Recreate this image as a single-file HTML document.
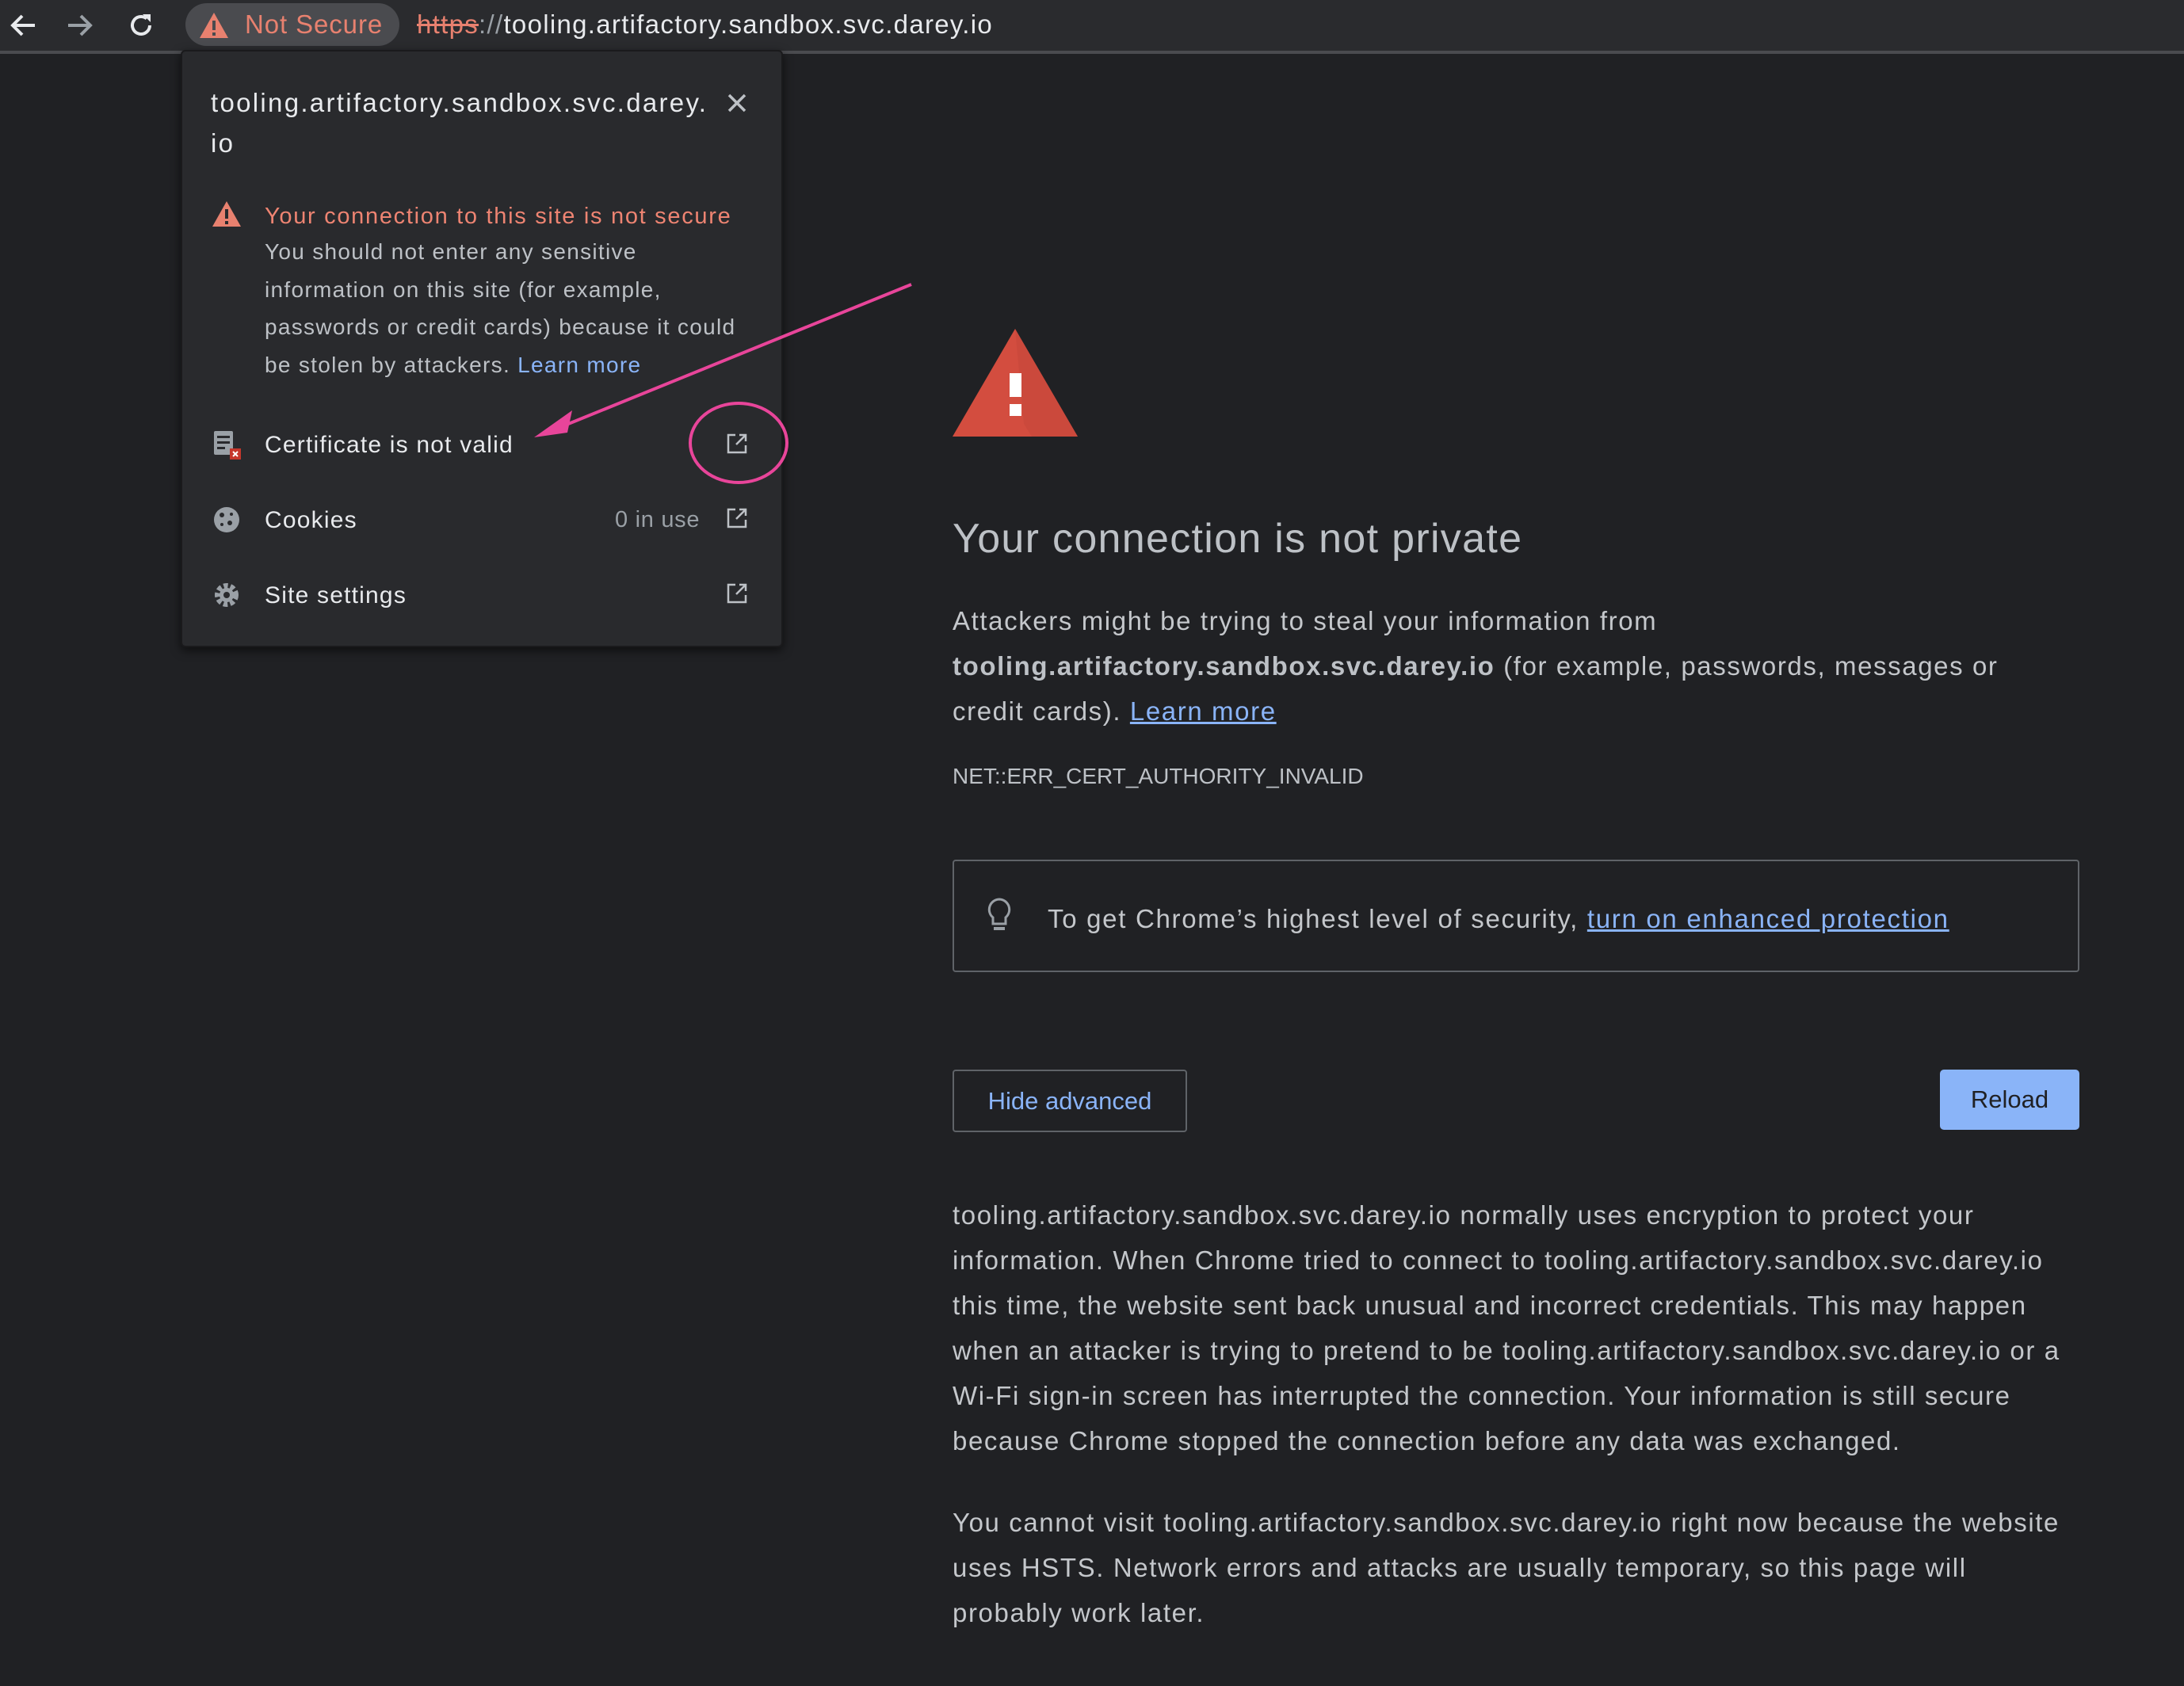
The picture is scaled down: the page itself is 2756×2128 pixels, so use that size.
<!DOCTYPE html>
<html><head><meta charset="utf-8"><style>
*{margin:0;padding:0;box-sizing:border-box}
body{width:2756px;height:2128px;background:#202124;font-family:"Liberation Sans",sans-serif;position:relative;overflow:hidden;color:#bdc1c6}
.a{position:absolute;white-space:nowrap}
.toolbar{position:absolute;left:0;top:0;width:2756px;height:68px;background:#2a2b2e;border-bottom:4px solid #4a4b4f}
.p{font-size:33px;line-height:57px;letter-spacing:1.6px;color:#c4c7cb}
.lnk{color:#8ab4f8;text-decoration:underline}
.pop{position:absolute;left:228px;top:63px;width:760px;height:754px;background:#292a2d;border:2px solid #1a1a1c;border-radius:6px;box-shadow:0 4px 12px rgba(0,0,0,.6)}
.pt{font-size:28px;color:#bdc1c6;line-height:47.5px;letter-spacing:1.3px}
.row{font-size:30px;color:#e8eaed;letter-spacing:1.2px}
</style></head><body>
<div class="toolbar"></div>
<svg class="a" style="left:8px;top:12px" width="44" height="40" viewBox="0 0 44 40"><path d="M36 20H8M20 8L8 20l12 12" stroke="#e8eaed" stroke-width="4" fill="none"/></svg>
<svg class="a" style="left:80px;top:12px" width="44" height="40" viewBox="0 0 44 40"><path d="M6 20h28M22 8l12 12-12 12" stroke="#9aa0a6" stroke-width="4" fill="none"/></svg>
<svg class="a" style="left:156px;top:10px" width="44" height="44" viewBox="0 0 44 44"><path d="M33 22a11 11 0 1 1-4-8.5" stroke="#e8eaed" stroke-width="4" fill="none"/><path d="M24 8h10v10z" fill="#e8eaed"/></svg>
<div class="a" style="left:234px;top:4px;width:270px;height:54px;border-radius:27px;background:#4a4b4f"></div>
<svg class="a" style="left:250px;top:14px" width="40" height="36" viewBox="0 0 40 36"><path d="M20 2L38 34H2z" fill="#e8816f"/><rect x="18" y="12" width="4" height="12" fill="#4a4b4f"/><rect x="18" y="27" width="4" height="4" fill="#4a4b4f"/></svg>
<div class="a" style="left:309px;top:12px;font-size:33px;color:#e8816f;letter-spacing:0.9px">Not Secure</div>
<div class="a" style="left:526px;top:12px;font-size:33px;color:#e8eaed;letter-spacing:1.3px"><span style="color:#e8816f;text-decoration:line-through">https</span><span style="color:#9aa0a6">://</span>tooling.artifactory.sandbox.svc.darey.io</div>

<div class="pop"></div>
<div class="a" style="left:266px;top:104px;font-size:33px;color:#e8eaed;line-height:51px;letter-spacing:2.3px">tooling.artifactory.sandbox.svc.darey.<br>io</div>
<svg class="a" style="left:916px;top:116px" width="28" height="28" viewBox="0 0 28 28"><path d="M4 4l20 20M24 4L4 24" stroke="#bdc1c6" stroke-width="3.5"/></svg>
<svg class="a" style="left:266px;top:252px" width="40" height="36" viewBox="0 0 40 36"><path d="M20 2L38 34H2z" fill="#e8816f"/><rect x="18" y="12" width="4" height="12" fill="#292a2d"/><rect x="18" y="27" width="4" height="4" fill="#292a2d"/></svg>
<div class="a pt" style="left:334px;top:250px;color:#ee8472;font-size:29px;letter-spacing:1.7px">Your connection to this site is not secure</div>
<div class="a pt" style="left:334px;top:294px">You should not enter any sensitive<br>information on this site (for example,<br>passwords or credit cards) because it could<br>be stolen by attackers. <span style="color:#8ab4f8">Learn more</span></div>
<svg class="a" style="left:268px;top:542px" width="40" height="40" viewBox="0 0 40 40"><rect x="2" y="2" width="24" height="30" rx="2" fill="#9aa0a6"/><rect x="6" y="8" width="16" height="3" fill="#292a2d"/><rect x="6" y="15" width="16" height="3" fill="#292a2d"/><rect x="6" y="22" width="10" height="3" fill="#292a2d"/><rect x="22" y="24" width="14" height="14" fill="#c5372c"/><path d="M26 28l6 6M32 28l-6 6" stroke="#fff" stroke-width="2"/></svg>
<div class="a row" style="left:334px;top:545px">Certificate is not valid</div>
<svg class="a" style="left:268px;top:638px" width="36" height="36" viewBox="0 0 36 36"><circle cx="18" cy="18" r="16" fill="#9aa0a6"/><circle cx="12" cy="12" r="3" fill="#292a2d"/><circle cx="22" cy="22" r="3" fill="#292a2d"/><circle cx="12" cy="24" r="2" fill="#292a2d"/><circle cx="24" cy="11" r="2" fill="#292a2d"/></svg>
<div class="a row" style="left:334px;top:640px">Cookies</div>
<div class="a" style="left:776px;top:640px;font-size:29px;color:#9aa0a6;letter-spacing:0.7px">0 in use</div>
<svg class="a" style="left:268px;top:733px" width="36" height="36" viewBox="0 0 36 36"><circle cx="18" cy="18" r="11" fill="none" stroke="#9aa0a6" stroke-width="8" stroke-dasharray="5 3"/><circle cx="18" cy="18" r="9" fill="#9aa0a6"/><circle cx="18" cy="18" r="4" fill="#292a2d"/></svg>
<div class="a row" style="left:334px;top:735px">Site settings</div>
<svg class="a" style="left:914px;top:544px" width="32" height="32" viewBox="0 0 32 32"><path d="M14 5H5v22h22V18" stroke="#bdc1c6" stroke-width="2.5" fill="none"/><path d="M19 5h8v8M27 5L15 17" stroke="#bdc1c6" stroke-width="2.5" fill="none"/></svg>
<svg class="a" style="left:914px;top:638px" width="32" height="32" viewBox="0 0 32 32"><path d="M14 5H5v22h22V18" stroke="#bdc1c6" stroke-width="2.5" fill="none"/><path d="M19 5h8v8M27 5L15 17" stroke="#bdc1c6" stroke-width="2.5" fill="none"/></svg>
<svg class="a" style="left:914px;top:733px" width="32" height="32" viewBox="0 0 32 32"><path d="M14 5H5v22h22V18" stroke="#bdc1c6" stroke-width="2.5" fill="none"/><path d="M19 5h8v8M27 5L15 17" stroke="#bdc1c6" stroke-width="2.5" fill="none"/></svg>

<svg class="a" style="left:0;top:0" width="2756" height="2128" viewBox="0 0 2756 2128">
<line x1="1150" y1="359" x2="700" y2="542" stroke="#e8459a" stroke-width="4"/>
<path d="M674 552L722 518L716 546Z" fill="#e8459a"/>
<ellipse cx="932" cy="559" rx="61" ry="50" fill="none" stroke="#e8459a" stroke-width="4"/>
</svg>

<svg class="a" style="left:1202px;top:415px" width="158" height="136" viewBox="0 0 158 136"><path d="M79 0L158 136H0z" fill="#d34d3f"/><path d="M79 0L158 136H100L90 120z" fill="#c4463a" opacity=".5"/><rect x="72" y="56" width="15" height="30" fill="#fff"/><rect x="72" y="95" width="15" height="15" fill="#fff"/></svg>
<div class="a" style="left:1202px;top:650px;font-size:52px;color:#bdc1c6;letter-spacing:1.3px">Your connection is not private</div>
<div class="a p" style="left:1202px;top:755px">Attackers might be trying to steal your information from<br><b style="color:#bdc1c6">tooling.artifactory.sandbox.svc.darey.io</b> (for example, passwords, messages or<br>credit cards). <span class="lnk">Learn more</span></div>
<div class="a" style="left:1202px;top:964px;font-size:28px;color:#bdc1c6;letter-spacing:0px">NET::ERR_CERT_AUTHORITY_INVALID</div>
<div class="a" style="left:1202px;top:1085px;width:1422px;height:142px;border:2px solid #5f6368;border-radius:4px"></div>
<svg class="a" style="left:1244px;top:1132px" width="34" height="46" viewBox="0 0 34 46"><path d="M17 3a13 13 0 0 0-8 23v8h16v-8a13 13 0 0 0-8-23z" fill="none" stroke="#9aa0a6" stroke-width="3"/><rect x="10" y="38" width="14" height="4" fill="#9aa0a6"/></svg>
<div class="a p" style="left:1322px;top:1131px;letter-spacing:1.7px">To get Chrome’s highest level of security, <span class="lnk">turn on enhanced protection</span></div>
<div class="a" style="left:1202px;top:1350px;width:296px;height:79px;border:2px solid #5f6368;border-radius:4px;color:#8ab4f8;font-size:31px;text-align:center;line-height:75px">Hide advanced</div>
<div class="a" style="left:2448px;top:1350px;width:176px;height:76px;background:#8ab4f8;border-radius:5px;color:#202124;font-size:31px;text-align:center;line-height:76px">Reload</div>
<div class="a p" style="left:1202px;top:1505px">tooling.artifactory.sandbox.svc.darey.io normally uses encryption to protect your<br>information. When Chrome tried to connect to tooling.artifactory.sandbox.svc.darey.io<br>this time, the website sent back unusual and incorrect credentials. This may happen<br>when an attacker is trying to pretend to be tooling.artifactory.sandbox.svc.darey.io or a<br>Wi-Fi sign-in screen has interrupted the connection. Your information is still secure<br>because Chrome stopped the connection before any data was exchanged.</div>
<div class="a p" style="left:1202px;top:1893px">You cannot visit tooling.artifactory.sandbox.svc.darey.io right now because the website<br>uses HSTS. Network errors and attacks are usually temporary, so this page will<br>probably work later.</div>
</body></html>
